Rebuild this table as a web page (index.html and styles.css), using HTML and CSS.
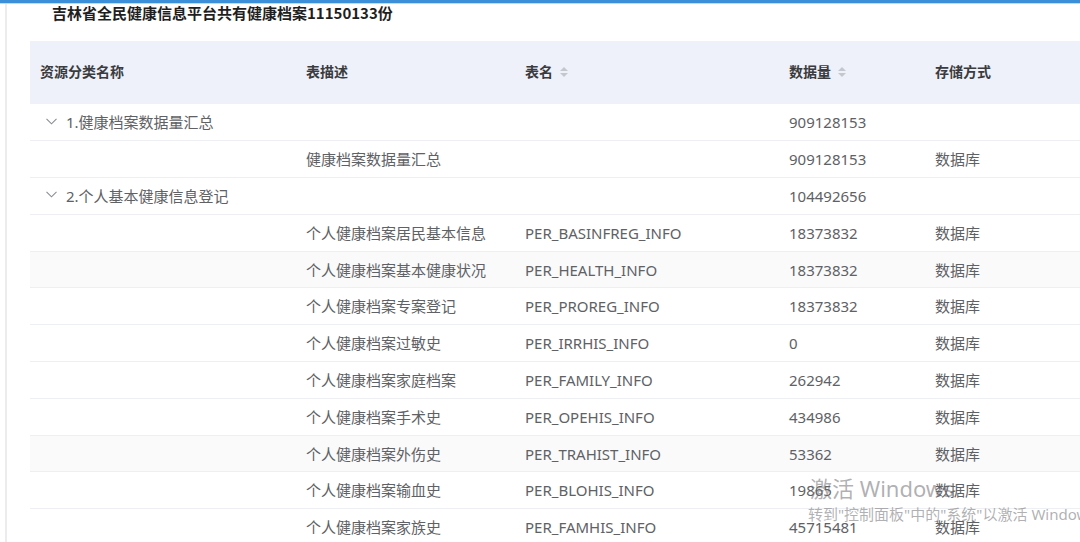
FILE: index.html
```html
<!DOCTYPE html>
<html lang="zh">
<head>
<meta charset="utf-8">
<link rel="stylesheet" href="styles.css">
</head>
<body>
<div class="topbar"></div>
<div class="page">
  <h1 class="title">吉林省全民健康信息平台共有健康档案11150133份</h1>
  <table class="grid">
    <colgroup>
      <col class="c1"><col class="c2"><col class="c3"><col class="c4"><col class="c5">
    </colgroup>
    <thead>
      <tr>
        <th>资源分类名称</th>
        <th>表描述</th>
        <th>表名<span class="sort"><i class="up"></i><i class="down"></i></span></th>
        <th>数据量<span class="sort"><i class="up"></i><i class="down"></i></span></th>
        <th>存储方式</th>
      </tr>
    </thead>
    <tbody>
      <tr class="group">
        <td><span class="chev"><svg width="11" height="7" viewBox="0 0 11 7"><polyline points="0.5,0.8 5.5,5.8 10.5,0.8" fill="none" stroke="#8a8d93" stroke-width="1.1"/></svg></span>1.健康档案数据量汇总</td>
        <td></td><td></td><td>909128153</td><td></td>
      </tr>
      <tr>
        <td></td><td>健康档案数据量汇总</td><td></td><td>909128153</td><td>数据库</td>
      </tr>
      <tr class="group">
        <td><span class="chev"><svg width="11" height="7" viewBox="0 0 11 7"><polyline points="0.5,0.8 5.5,5.8 10.5,0.8" fill="none" stroke="#8a8d93" stroke-width="1.1"/></svg></span>2.个人基本健康信息登记</td>
        <td></td><td></td><td>104492656</td><td></td>
      </tr>
      <tr><td></td><td>个人健康档案居民基本信息</td><td>PER_BASINFREG_INFO</td><td>18373832</td><td>数据库</td></tr>
      <tr class="shade"><td></td><td>个人健康档案基本健康状况</td><td>PER_HEALTH_INFO</td><td>18373832</td><td>数据库</td></tr>
      <tr><td></td><td>个人健康档案专案登记</td><td>PER_PROREG_INFO</td><td>18373832</td><td>数据库</td></tr>
      <tr><td></td><td>个人健康档案过敏史</td><td>PER_IRRHIS_INFO</td><td>0</td><td>数据库</td></tr>
      <tr><td></td><td>个人健康档案家庭档案</td><td>PER_FAMILY_INFO</td><td>262942</td><td>数据库</td></tr>
      <tr><td></td><td>个人健康档案手术史</td><td>PER_OPEHIS_INFO</td><td>434986</td><td>数据库</td></tr>
      <tr class="shade"><td></td><td>个人健康档案外伤史</td><td>PER_TRAHIST_INFO</td><td>53362</td><td>数据库</td></tr>
      <tr><td></td><td>个人健康档案输血史</td><td>PER_BLOHIS_INFO</td><td>19865</td><td>数据库</td></tr>
      <tr><td></td><td>个人健康档案家族史</td><td>PER_FAMHIS_INFO</td><td>45715481</td><td>数据库</td></tr>
    </tbody>
  </table>
</div>
<div class="watermark">
  <div class="wm1">激活 Windows</div>
  <div class="wm2">转到"控制面板"中的"系统"以激活 Windows</div>
</div>
</body>
</html>
```

FILE: styles.css
```css
html, body {
  margin: 0;
  padding: 0;
  width: 1080px;
  height: 542px;
  overflow: hidden;
  background: #ffffff;
  font-family: "Noto Sans", "Noto Sans CJK SC", sans-serif;
}

.topbar {
  height: 3px;
  background: #3b8fd9;
  border-bottom: 1px solid #bcdcf3;
}

.page {
  margin-left: 5px;
  border-left: 2px solid #ececee;
  padding-left: 23px;
  height: 538px;
}

.title {
  margin: 0;
  padding-left: 22px;
  height: 37px;
  font-size: 15px;
  line-height: 18px;
  font-weight: 700;
  color: #1f1f1f;
  font-family: "Noto Sans CJK SC", sans-serif;
}

.grid {
  border-collapse: collapse;
  table-layout: fixed;
  width: 1060px;
  font-size: 15px;
  color: #606165;
}

.c1 { width: 276px; }
.c2 { width: 219px; }
.c3 { width: 264px; }
.c4 { width: 146px; }
.c5 { width: 155px; }

thead tr {
  background: #eef1f9;
  height: 63px;
}

th {
  text-align: left;
  font-weight: 700;
  font-size: 14px;
  color: #3a3b3e;
  padding: 0 0 4px 0;
  font-family: "Noto Sans CJK SC", sans-serif;
}

th:first-child,
td:first-child {
  padding-left: 10px;
}

.sort {
  display: inline-flex;
  flex-direction: column;
  gap: 2px;
  margin-left: 7px;
  vertical-align: middle;
  position: relative;
  top: -1px;
}

.sort i {
  display: block;
  width: 0;
  height: 0;
  border-left: 4px solid transparent;
  border-right: 4px solid transparent;
}

.sort .up { border-bottom: 4px solid #c4c7cd; }
.sort .down { border-top: 4px solid #c4c7cd; }

tbody tr {
  height: 36.8px;
  border-bottom: 1px solid #eeeff2;
}

tbody tr.shade {
  background: #fafafb;
}

td {
  padding: 0;
  white-space: nowrap;
  font-family: "Noto Sans", "Noto Sans CJK SC", sans-serif;
  line-height: 20px;
}

.chev {
  display: inline-block;
  width: 26px;
  padding-left: 6px;
  box-sizing: border-box;
  vertical-align: middle;
  position: relative;
  top: -3px;
}

.chev svg { display: block; }

.watermark {
  position: absolute;
  left: 808px;
  top: 473px;
  color: rgba(110, 110, 115, 0.55);
  white-space: nowrap;
  font-family: "Noto Sans", "Noto Sans CJK SC", sans-serif;
}

.wm1 {
  font-size: 22px;
  line-height: 30px;
  padding-left: 2px;
}

.wm2 {
  font-size: 15px;
  line-height: 20px;
  margin-top: 1px;
}
```
